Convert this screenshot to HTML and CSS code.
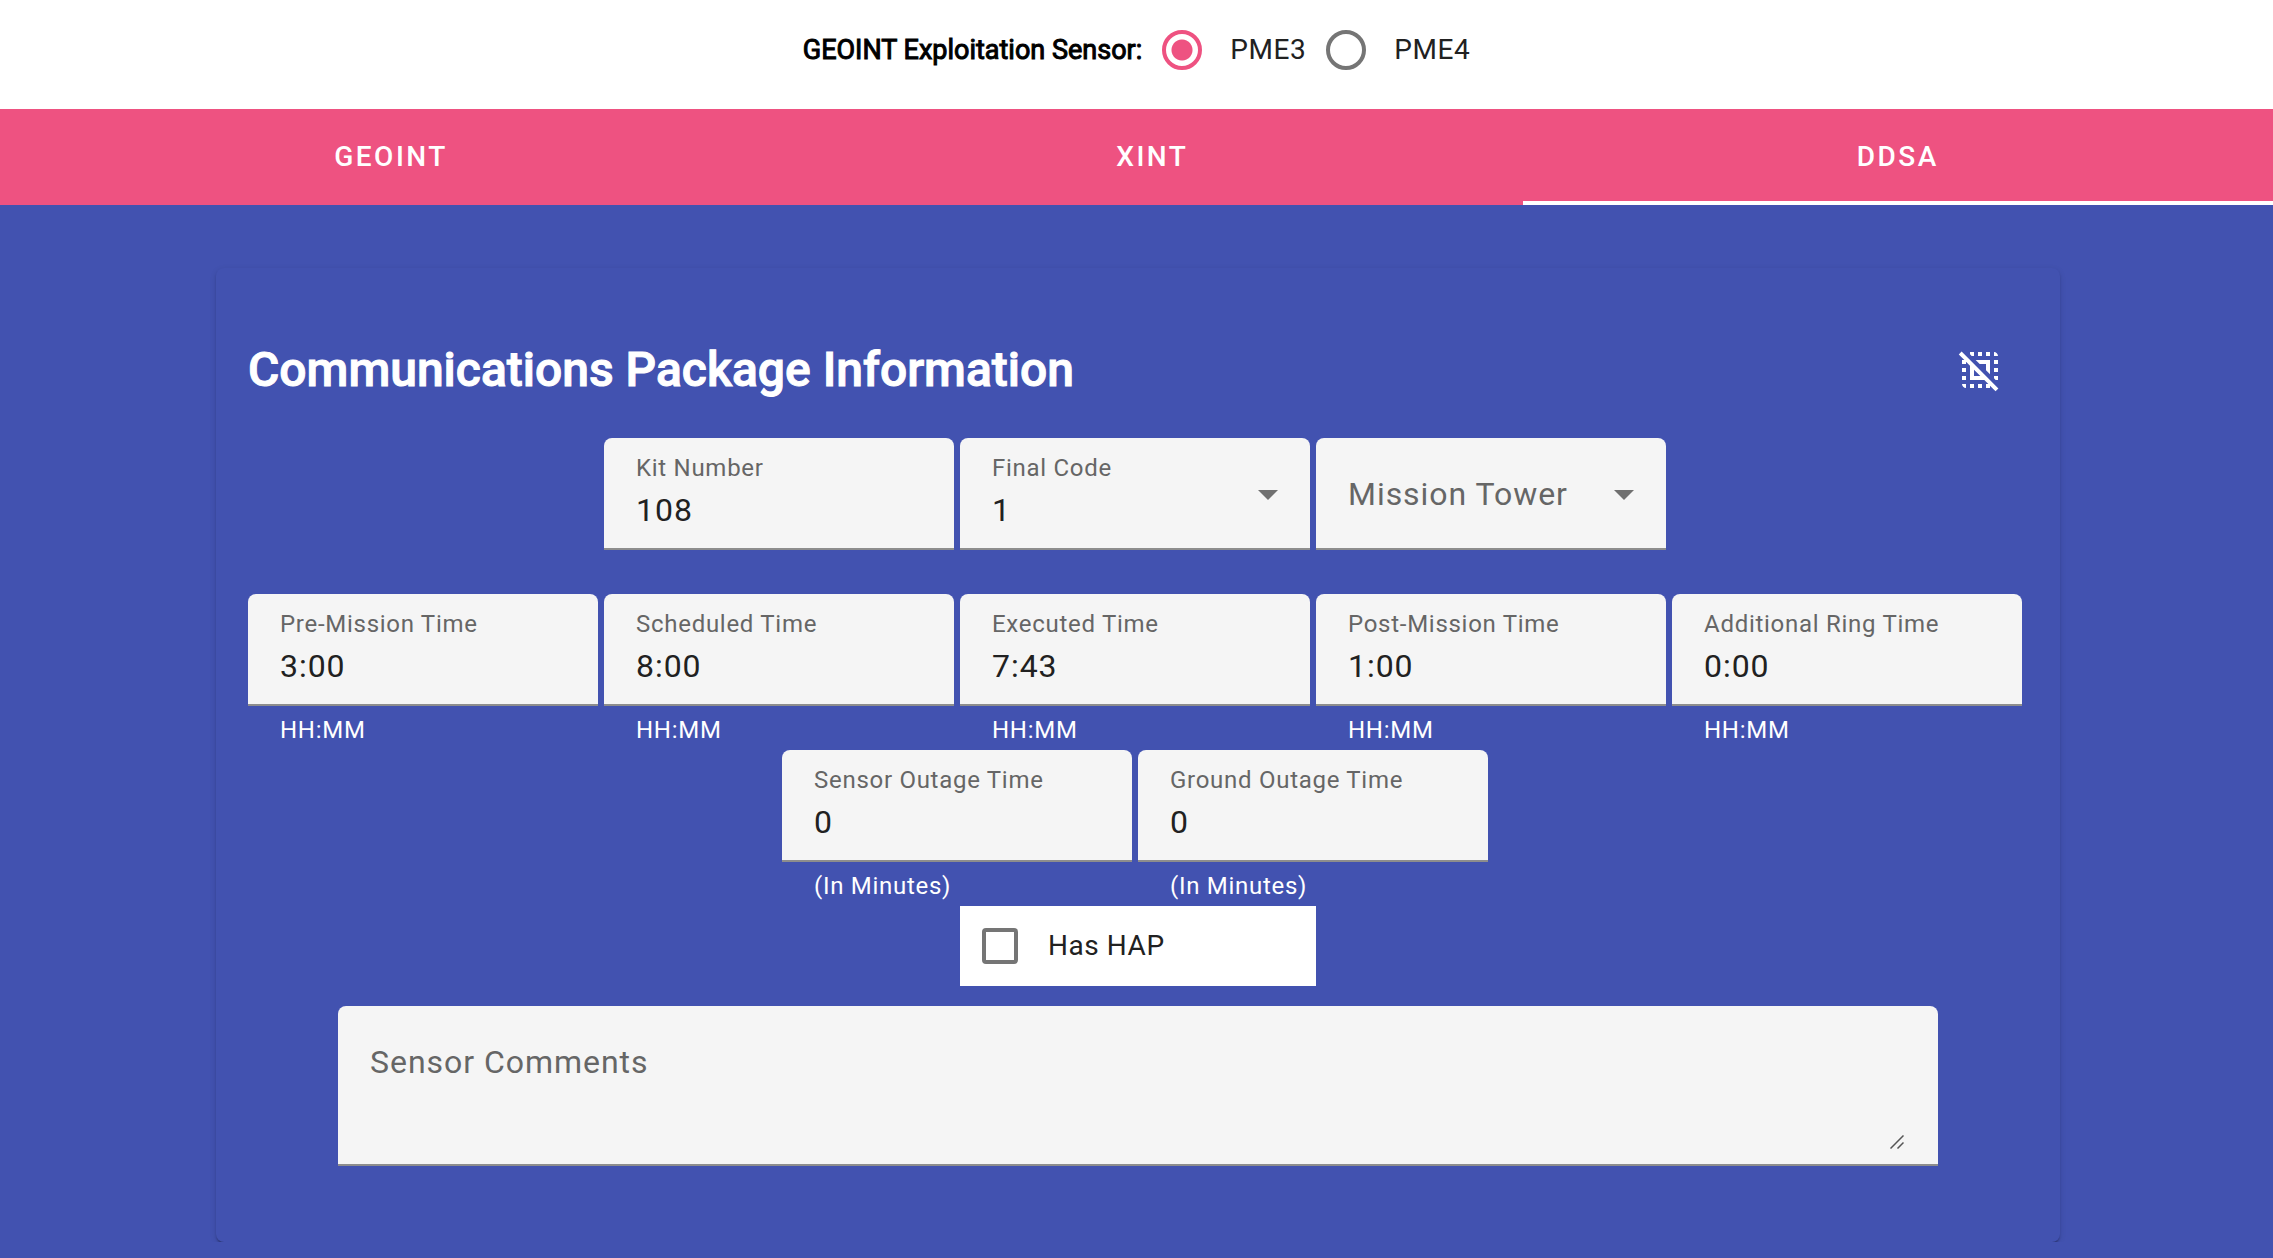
FILE: index.html
```html
<!DOCTYPE html>
<html lang="en">
<head>
<meta charset="utf-8">
<meta name="viewport" content="width=device-width, initial-scale=1">
<title>Mission Report – DDSA</title>
<link rel="stylesheet" href="styles.css">
</head>
<body>
<fieldset class="sensor-picker" aria-labelledby="sensor-title">
  <strong class="sensor-title" id="sensor-title">GEOINT Exploitation Sensor:</strong>
  <label class="option"><input class="radio" type="radio" name="sensor" value="pme3" checked>PME3</label>
  <label class="option"><input class="radio" type="radio" name="sensor" value="pme4">PME4</label>
</fieldset>

<nav class="tabs" role="tablist">
  <button class="tab" type="button" role="tab" aria-selected="false">GEOINT</button>
  <button class="tab" type="button" role="tab" aria-selected="false">XINT</button>
  <button class="tab tab-active" type="button" role="tab" aria-selected="true">DDSA</button>
</nav>

<main class="panel">
  <form class="card">
    <header class="card-header">
      <h1 class="card-title">Communications Package Information</h1>
      <button class="icon-button" type="button" aria-label="Clear form">
        <svg class="icon" viewBox="0 0 24 24" aria-hidden="true"><path fill="currentColor" d="M3 13h2v-2H3v2zm8-8h2V3h-2v2zm8-2v2h2c0-1.100-.9-2-2-2zM5 21v-2H3c0 1.100.9 2 2 2zm-2-4h2v-2H3v2zm8 4h2v-2h-2v2zm8-8h2v-2h-2v2zm0-4h2V7h-2v2zm-4-4h2V3h-2v2zM7 21h2v-2H7v2zM7.830 5H9V3H7v1.170zM19.830 17H21v-2h-2v1.170zM21.190 21.190L2.810 2.810 1.390 4.220 4.170 7H3v2h2V7.830l2 2V17h7.170l2 2H15v2h2v-1.170l2.780 2.780zM9 15v-3.170L12.170 15zM9.830 7H17v7.170l-2-2V9h-3.170z"/></svg>
      </button>
    </header>

    <div class="row">
      <div class="cell">
        <div class="field">
          <label class="label" for="kit">Kit Number</label>
          <input class="control" id="kit" type="text" value="108">
        </div>
      </div>
      <div class="cell">
        <div class="field">
          <label class="label" for="code">Final Code</label>
          <select class="control" id="code"><option selected>1</option><option>2</option><option>3</option></select>
          <svg class="arrow" viewBox="0 0 20 10" aria-hidden="true"><path fill="currentColor" d="M0 0h20L10 10z"/></svg>
        </div>
      </div>
      <div class="cell">
        <div class="field field-empty">
          <label class="label" for="tower">Mission Tower</label>
          <select class="control" id="tower"><option value="" selected></option><option>North</option><option>South</option></select>
          <svg class="arrow" viewBox="0 0 20 10" aria-hidden="true"><path fill="currentColor" d="M0 0h20L10 10z"/></svg>
        </div>
      </div>
    </div>

    <div class="row">
      <div class="cell">
        <div class="field">
          <label class="label" for="pre">Pre-Mission Time</label>
          <input class="control" id="pre" type="text" value="3:00">
        </div>
        <p class="hint">HH:MM</p>
      </div>
      <div class="cell">
        <div class="field">
          <label class="label" for="scheduled">Scheduled Time</label>
          <input class="control" id="scheduled" type="text" value="8:00">
        </div>
        <p class="hint">HH:MM</p>
      </div>
      <div class="cell">
        <div class="field">
          <label class="label" for="executed">Executed Time</label>
          <input class="control" id="executed" type="text" value="7:43">
        </div>
        <p class="hint">HH:MM</p>
      </div>
      <div class="cell">
        <div class="field">
          <label class="label" for="post">Post-Mission Time</label>
          <input class="control" id="post" type="text" value="1:00">
        </div>
        <p class="hint">HH:MM</p>
      </div>
      <div class="cell">
        <div class="field">
          <label class="label" for="ring">Additional Ring Time</label>
          <input class="control" id="ring" type="text" value="0:00">
        </div>
        <p class="hint">HH:MM</p>
      </div>
    </div>

    <div class="row">
      <div class="cell">
        <div class="field">
          <label class="label" for="sensor-outage">Sensor Outage Time</label>
          <input class="control" id="sensor-outage" type="text" value="0">
        </div>
        <p class="hint">(In Minutes)</p>
      </div>
      <div class="cell">
        <div class="field">
          <label class="label" for="ground-outage">Ground Outage Time</label>
          <input class="control" id="ground-outage" type="text" value="0">
        </div>
        <p class="hint">(In Minutes)</p>
      </div>
    </div>

    <div class="row">
      <label class="hap"><input class="checkbox" type="checkbox">Has HAP</label>
    </div>

    <div class="field field-empty comments">
      <label class="label" for="comments">Sensor Comments</label>
      <textarea class="control" id="comments" rows="2"></textarea>
      <svg class="grip" viewBox="0 0 14 14" aria-hidden="true"><path fill="none" stroke="#555" stroke-width="1.500" d="M.5 13.500L13.500.5M7.500 13.500l6-6"/></svg>
    </div>
  </form>
</main>
</body>
</html>
```

FILE: styles.css
```css
:root {
  --blue: #4252b0;
  --pink: #ee5281;
  --field: #f5f5f5;
  --ink: #212121;
  --muted: #666;
  --outline: #757575;
}

* {
  box-sizing: border-box;
}

body {
  margin: 0;
  background: var(--blue);
  color: var(--ink);
  font-family: Roboto, "Liberation Sans", sans-serif;
  font-size: 28px;
  line-height: 40px;
}

/* Sensor selection */
.sensor-picker {
  display: flex;
  flex-wrap: wrap;
  align-items: center;
  justify-content: center;
  margin: 0;
  padding: 10px 0 19px;
  border: 0;
  background: #fff;
}

.sensor-title {
  color: #000;
  font-size: 27px;
  font-weight: 400;
  -webkit-text-stroke: 1px currentColor;
}

.option {
  display: flex;
  align-items: center;
  letter-spacing: 0.02em;
}

.radio,
.checkbox {
  flex: none;
  appearance: none;
  border: 4px solid var(--outline);
  background: #fff;
}

.radio {
  width: 40px;
  height: 40px;
  margin: 20px 28px 20px 20px;
  border-radius: 50%;
}

.radio:checked {
  border-color: var(--pink);
  background: radial-gradient(circle, var(--pink) 10px, #fff 11px);
}

/* Tabs */
.tabs {
  display: flex;
  background: var(--pink);
}

.tab {
  flex: 1 1 auto;
  height: 96px;
  padding: 4px 48px 0;
  border: 0;
  border-bottom: 4px solid transparent;
  background: none;
  color: #fff;
  font: inherit;
  font-weight: 500;
  letter-spacing: 0.09em;
}

.tab-active {
  border-bottom-color: #fff;
}

/* Card */
.panel {
  margin-bottom: 16px;
  padding: 63px 213px 0 216px;
  overflow: hidden;
}

.card {
  padding: 54px 32px 76px;
  border-radius: 8px;
  background: var(--blue);
  box-shadow: 0 4px 2px -2px rgba(0, 0, 0, 0.2), 0 2px 2px rgba(0, 0, 0, 0.14), 0 2px 6px rgba(0, 0, 0, 0.12);
}

.card-header {
  display: flex;
  align-items: center;
  justify-content: space-between;
  margin-bottom: 20px;
}

.card-title {
  margin: 0;
  color: #fff;
  font-size: 48px;
  font-weight: 500;
  line-height: 56px;
  -webkit-text-stroke: 1px currentColor;
}

.icon-button {
  flex: none;
  height: 96px;
  padding: 24px;
  border: 0;
  background: none;
  color: #fff;
}

.icon {
  display: block;
  width: 48px;
  height: 48px;
}

/* Form fields */
.row {
  display: flex;
  justify-content: center;
}

.cell {
  flex: 0 0 20%;
  min-height: 156px;
  padding-right: 6px;
}

.field {
  position: relative;
  display: grid;
  row-gap: 4px;
  padding: 16px 32px 14px;
  border-bottom: 2px solid #8d8d8d;
  border-radius: 8px 8px 0 0;
  background: var(--field);
}

.label {
  color: var(--muted);
  font-size: 24px;
  line-height: 28px;
  letter-spacing: 0.03em;
  white-space: nowrap;
}

.control {
  appearance: none;
  width: 100%;
  min-width: 0;
  height: 48px;
  padding: 0;
  border: 0;
  background: none;
  color: var(--ink);
  font: inherit;
  font-size: 32px;
  line-height: 48px;
  letter-spacing: 0.03em;
}

/* An empty field shows its label in place of the value */
.field-empty {
  padding: 32px 32px 30px;
}

.field-empty .label,
.field-empty .control {
  grid-area: 1 / 1;
}

.field-empty .label {
  font-size: 32px;
  line-height: 48px;
  pointer-events: none;
}

.arrow {
  position: absolute;
  top: 52px;
  right: 32px;
  width: 20px;
  height: 10px;
  color: #707070;
  pointer-events: none;
}

.hint {
  margin: 0;
  padding: 10px 32px 6px;
  color: #fff;
  font-size: 24px;
  line-height: 28px;
  letter-spacing: 0.03em;
}

.hap {
  display: flex;
  flex: 0 0 20%;
  align-items: center;
  background: #fff;
  letter-spacing: 0.02em;
}

.checkbox {
  width: 36px;
  height: 36px;
  margin: 22px 30px 22px 22px;
  border-radius: 4px;
}

.comments {
  width: 90%;
  max-width: 1600px;
  margin: 20px auto 0;
  padding-bottom: 14px;
}

.comments .control {
  height: 112px;
  resize: none;
}

.grip {
  position: absolute;
  right: 34px;
  bottom: 15px;
  width: 14px;
  height: 14px;
}
```
